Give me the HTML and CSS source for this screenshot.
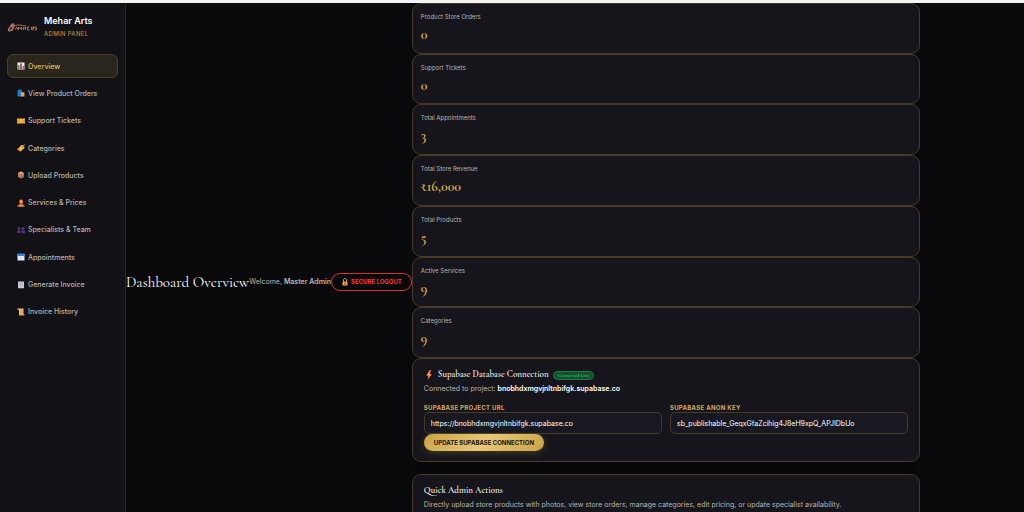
FILE: index.html
```html
<!DOCTYPE html>
<html lang="en">

<head>
  <meta charset="UTF-8">
  <meta name="viewport" content="width=device-width, initial-scale=1.0">
  <title>Mehar Arts - Admin Panel</title>
  <link rel="stylesheet" href="styles.css">
</head>

<body>
  <div class="admin-layout">
    <aside class="sidebar">
      <div class="brand">
        <svg class="brand-logo" viewBox="0 0 30 12" fill="none" stroke="#a8705f">
          <path d="M1 9c1-3 2-4 4-4s1 3-1 4-3 1-3 0zM3 5c2-3 4-2 3 0L4 10" stroke-width="1.6" />
          <path d="M8 9l1-3 2 3M11 9V6l2 2 1-2v3M16 6v3M18 6v3M16 7h2M20 6v3h2M20 6h2M24 9V6h2v2h-2l2 1M29 6h-2v1h2v2h-2" />
          <path d="M6 5c6-2 9 0 13 0" stroke="#d49a80" stroke-width=".7" />
        </svg>
        <div>
          <div class="brand-name">Mehar Arts</div>
          <div class="brand-sub">ADMIN PANEL</div>
        </div>
      </div>

      <nav class="nav">
        <a class="nav-link active" href="#overview">
          <svg class="icon" viewBox="0 0 16 16"><path fill="#e9edf0" d="M1 1h14v14H1z" /><path fill="#35a852" d="M2 6h3v8H2z" /><path fill="#e0455e" d="M6 3h4v11H6z" /><path fill="#3f8fe0" d="M11 8h3v6h-3z" /></svg>
          Overview
        </a>
        <a class="nav-link" href="#orders">
          <svg class="icon" viewBox="0 0 16 16"><path fill="#1c7fce" d="M1 3h9v12H1z" /><path fill="none" stroke="#4aa8ec" stroke-width="1.4" d="M3 4V2h5v2" /><path fill="#e9a13c" d="M8 7h7v8H8z" /><path fill="none" stroke="#f4c26d" d="M10 10V7h3v3" /></svg>
          View Product Orders
        </a>
        <a class="nav-link" href="#tickets">
          <svg class="icon" viewBox="0 0 16 16"><path fill="#f0b429" d="M0 3h16v4a1 1 0 0 0 0 2v4H0V9a1 1 0 0 0 0-2z" /><path stroke="#c98213" d="M4 5v6M12 5v6" /></svg>
          Support Tickets
        </a>
        <a class="nav-link" href="#categories">
          <svg class="icon" viewBox="0 0 16 16"><path fill="#f4b740" d="M0 11 9 2l5 1 1 5-8 7z" /><path fill="#c9791a" d="m0 11 7 4v-2L2 9z" /><circle cx="12" cy="5" r="1.4" fill="#6b3b12" /><path fill="none" stroke="#e8e2d5" d="M12 5c1-3 2-3 4-4" /></svg>
          Categories
        </a>
        <a class="nav-link" href="#upload">
          <svg class="icon" viewBox="0 0 16 16"><path fill="#bb7e5b" d="m8 1 6 3v8l-6 3-6-3V4z" /><path fill="#d8a07d" d="m8 1 6 3-6 3-6-3z" /><path fill="#a56c50" d="m8 7 6-3v8l-6 3z" /><path stroke="#e8c4a8" d="m5 3 6 3v3" fill="none" /></svg>
          Upload Products
        </a>
        <a class="nav-link" href="#services">
          <svg class="icon" viewBox="0 0 16 16"><path fill="#b53a1c" d="M5 1c4-1 7 0 7 4v5H5z" /><circle cx="8" cy="5" r="3" fill="#f5b942" /><path fill="#ee5a24" d="M3 15c0-4 2-6 5-6s5 2 5 6z" /><path fill="#f5b942" d="M1 13h14v2H1z" /></svg>
          Services &amp; Prices
        </a>
        <a class="nav-link" href="#team">
          <svg class="icon" viewBox="0 0 16 16" fill="#533582"><circle cx="4" cy="5" r="3" /><circle cx="12" cy="5" r="3" /><path d="M0 14V9h7v5zM9 14V9h7v5z" /></svg>
          Specialists &amp; Team
        </a>
        <a class="nav-link" href="#appointments">
          <svg class="icon" viewBox="0 0 16 16"><path fill="#e6edf8" d="M1 2h14v13H1z" /><path fill="#2f83e4" d="M1 1h14v5H1z" /><path stroke="#a9c1e4" d="M3 9h10M3 12h7" stroke-dasharray="2 1" /></svg>
          Appointments
        </a>
        <a class="nav-link" href="#invoice">
          <svg class="icon" viewBox="0 0 16 16"><path fill="#cbc7d4" d="M2 1h12v14l-2-1-2 1-2-1-2 1-2-1-2 1z" /><path stroke="#aaa5b6" d="M4 4h8M4 7h8M4 10h8" /></svg>
          Generate Invoice
        </a>
        <a class="nav-link" href="#history">
          <svg class="icon" viewBox="0 0 16 16"><path fill="#f0b978" d="M2 1h11v12H4V4H1c0-2 0-3 1-3z" /><path fill="#e09a58" d="M5 12h10c0 2-1 3-2 3H5c-1 0-1-1-1-3zM1 4c0-2 3-2 4 0z" /><path stroke="#c98a50" d="M6 5h5M6 7h5M6 9h5" /></svg>
          Invoice History
        </a>
      </nav>
    </aside>

    <main class="main">
      <h1 class="page-title">Dashboard Overview</h1>
      <span class="welcome">Welcome, <strong>Master Admin</strong></span>
      <button class="btn-logout" type="button">
        <svg class="icon" viewBox="0 0 16 16"><path fill="none" stroke="#c9a27c" stroke-width="2" d="M5 7V4c0-4 6-4 6 0v3" /><path fill="#f3a83b" d="M3 7h10v8H3z" /><path fill="#6b3b12" d="M7 9h2v4H7z" /></svg>
        SECURE LOGOUT
      </button>

      <div class="content">
        <section class="stats">
          <div class="stat-card">
            <div class="stat-label">Product Store Orders</div>
            <div class="stat-value">0</div>
          </div>
          <div class="stat-card">
            <div class="stat-label">Support Tickets</div>
            <div class="stat-value">0</div>
          </div>
          <div class="stat-card">
            <div class="stat-label">Total Appointments</div>
            <div class="stat-value">3</div>
          </div>
          <div class="stat-card">
            <div class="stat-label">Total Store Revenue</div>
            <div class="stat-value">₹16,000</div>
          </div>
          <div class="stat-card">
            <div class="stat-label">Total Products</div>
            <div class="stat-value">5</div>
          </div>
          <div class="stat-card">
            <div class="stat-label">Active Services</div>
            <div class="stat-value">9</div>
          </div>
          <div class="stat-card">
            <div class="stat-label">Categories</div>
            <div class="stat-value">9</div>
          </div>
        </section>

        <section class="panel">
          <h2 class="panel-title">
            <svg class="bolt" viewBox="0 0 12 14"><path fill="#f4743b" d="M7 0 2 8h3l-1 6 6-8H7l2-6z" /><path fill="#ffb06a" d="M7 1 4 7h3l-1 3 3-4H6z" /></svg>
            Supabase Database Connection
            <span class="badge">Connected Live</span>
          </h2>
          <p class="panel-text">Connected to project: <strong>bnobhdxmgvjnltnbifgk.supabase.co</strong></p>
          <form>
            <div class="form-row">
              <div class="form-group">
                <label for="project-url">SUPABASE PROJECT URL</label>
                <input id="project-url" type="text" value="https://bnobhdxmgvjnltnbifgk.supabase.co">
              </div>
              <div class="form-group">
                <label for="anon-key">SUPABASE ANON KEY</label>
                <input id="anon-key" type="text" value="sb_publishable_GeqxGfaZcihig4J8eH9xpQ_APJIDbUo">
              </div>
            </div>
            <button class="btn-gold" type="submit">UPDATE SUPABASE CONNECTION</button>
          </form>
        </section>

        <section class="panel">
          <h2 class="panel-title">Quick Admin Actions</h2>
          <p class="panel-text">Directly upload store products with photos, view store orders, manage categories, edit pricing, or update specialist availability.</p>
        </section>
      </div>
    </main>
  </div>
</body>

</html>
```

FILE: styles.css
```css
* {
  box-sizing: border-box;
}

body {
  margin: 0;
  background-color: #0a0a0c;
  border-top: 3px solid #f4f4f4;
  color: #b9b5ac;
  font-family: Inter, "Liberation Sans", sans-serif;
  font-size: 7px;
}

h1,
h2,
p {
  margin: 0;
}

strong {
  font-weight: 600;
}

.admin-layout {
  display: flex;
}

/* Sidebar */
.sidebar {
  width: 126px;
  flex-shrink: 0;
  padding: 11px 7px;
  background-color: #121116;
  border-right: 1px solid #2b281f;
}

.brand {
  display: flex;
  align-items: center;
  gap: 6px;
  margin-bottom: 14px;
}

.brand-logo {
  width: 31px;
  height: 12px;
}

.brand-name {
  color: #fff;
  font-size: 9px;
  font-weight: 600;
  line-height: 14px;
}

.brand-sub {
  color: #b08a3c;
  font-size: 6px;
  font-weight: 500;
  letter-spacing: 0.05em;
  line-height: 12px;
}

.nav {
  display: grid;
  grid-auto-rows: 1fr;
  gap: 3px;
  min-height: 270px;
}

.nav-link {
  display: flex;
  align-items: center;
  gap: 3px;
  padding: 0 9px;
  border: 1px solid transparent;
  border-radius: 6px;
  color: #b9b5ac;
  font-size: 7px;
  font-weight: 500;
  text-decoration: none;
  white-space: nowrap;
}

.nav-link.active {
  background-color: #2b261d;
  border-color: #4b3f25;
  color: #d4af4f;
  font-weight: 600;
}

.icon {
  width: 8px;
  height: 8px;
  flex-shrink: 0;
}

/* Main area */
.main {
  display: flex;
  flex: 1;
  align-items: center;
  min-width: 0;
  padding-right: 104px;
}

.page-title {
  color: #fff;
  font-family: "Cormorant Garamond", "Liberation Serif", serif;
  font-size: 15px;
  font-weight: 400;
  white-space: nowrap;
}

.welcome {
  font-size: 7px;
  white-space: nowrap;
}

.btn-logout {
  display: flex;
  align-items: center;
  gap: 2px;
  flex-shrink: 0;
  height: 18px;
  padding: 0 9px;
  background: transparent;
  border: 1px solid #d92f2a;
  border-radius: 9px;
  color: #ff332f;
  font-family: inherit;
  font-size: 6px;
  font-weight: 700;
  white-space: nowrap;
  cursor: pointer;
}

.content {
  flex: 1;
  min-width: 0;
}

.stats {
  display: grid;
  grid-auto-rows: 1fr;
  min-height: 355px;
}

.stat-card,
.panel {
  background-color: #16151b;
  border: 1px solid #453b26;
  border-radius: 9px;
}

.stat-card {
  padding: 6px 8px;
}

.stat-label {
  font-size: 6px;
  line-height: 13px;
}

.stat-value {
  color: #d0a945;
  font-family: "Cormorant Garamond", "Liberation Serif", serif;
  font-size: 14px;
  font-weight: 700;
  line-height: 23px;
}

.panel {
  min-height: 86px;
  margin-bottom: 12px;
  padding: 9px 11px 10px;
  box-shadow: 0 4px 12px rgba(0, 0, 0, 0.4);
}

.panel:last-child {
  margin-bottom: 0;
}

.panel-title {
  display: flex;
  align-items: center;
  gap: 4px;
  color: #f2efe8;
  font-family: "Cormorant Garamond", "Liberation Serif", serif;
  font-size: 9px;
  font-weight: 600;
  line-height: 14px;
}

.bolt {
  width: 10px;
  height: 10px;
}

.badge {
  padding: 0 4px;
  background-color: #14502f;
  border: 1px solid #1c7a42;
  border-radius: 5px;
  color: #2ac765;
  font-size: 5px;
  font-weight: 700;
  line-height: 7px;
}

.panel-text {
  margin-bottom: 8px;
  line-height: 14px;
}

.panel-text strong {
  color: #fff;
}

.form-row {
  display: flex;
  gap: 8px;
}

.form-group {
  flex: 1;
  min-width: 0;
}

.form-group label {
  display: block;
  color: #d3ab58;
  font-size: 6px;
  font-weight: 700;
  letter-spacing: 0.05em;
  line-height: 8px;
}

.form-group input {
  display: block;
  width: 100%;
  height: 22px;
  padding: 0 6px;
  background-color: #181821;
  border: 1px solid #453b26;
  border-radius: 5px;
  color: #fff;
  font-family: inherit;
  font-size: 7px;
}

.btn-gold {
  height: 17px;
  padding: 0 10px;
  background: linear-gradient(135deg, #c9a343, #e6c878 50%, #c9a343);
  border: none;
  border-radius: 9px;
  box-shadow: 0 2px 6px rgba(201, 163, 67, 0.25);
  color: #14120c;
  font-family: inherit;
  font-size: 6px;
  font-weight: 700;
  cursor: pointer;
}
```
